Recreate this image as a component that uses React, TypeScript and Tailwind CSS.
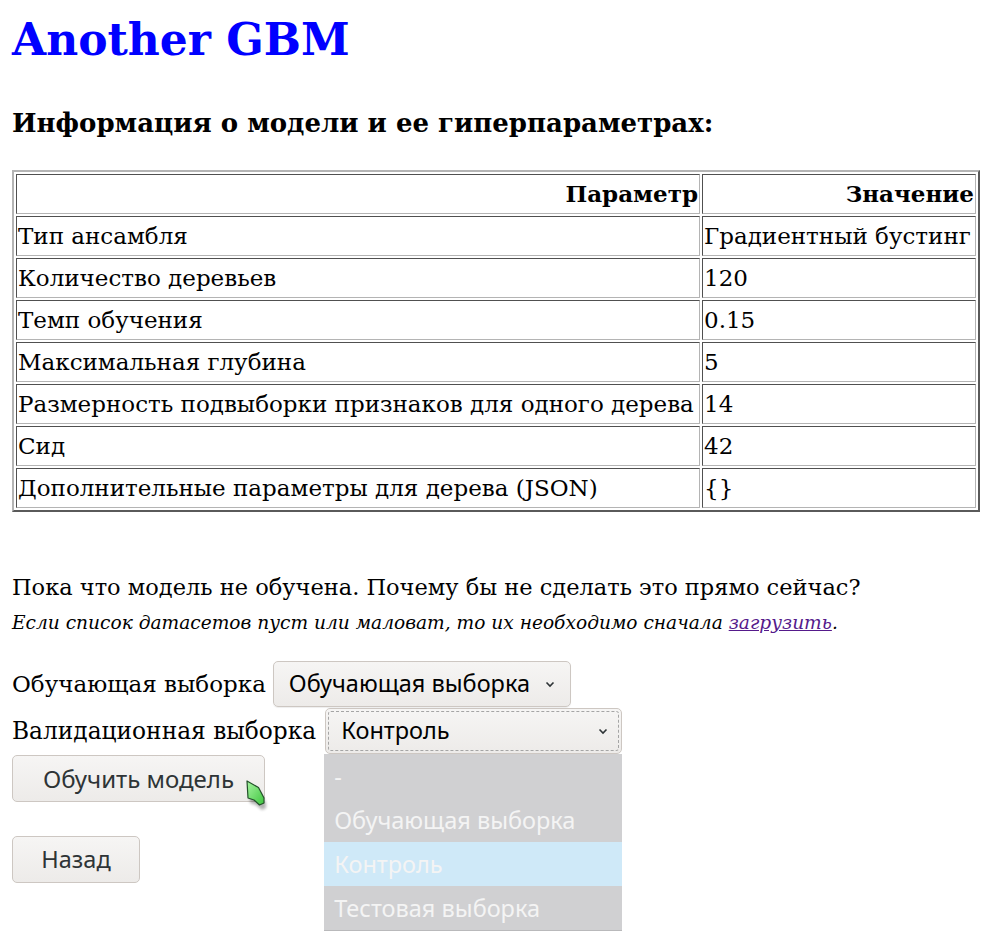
import { useState } from "react";

const params = [
  { name: "Тип ансамбля", value: "Градиентный бустинг" },
  { name: "Количество деревьев", value: "120" },
  { name: "Темп обучения", value: "0.15" },
  { name: "Максимальная глубина", value: "5" },
  { name: "Размерность подвыборки признаков для одного дерева", value: "14" },
  { name: "Сид", value: "42" },
  { name: "Дополнительные параметры для дерева (JSON)", value: "{}" },
];

const datasets = ["-", "Обучающая выборка", "Контроль", "Тестовая выборка"];

const cell =
  "h-[40px] p-[1px] whitespace-nowrap border border-t-[#505050] border-l-[#505050] border-b-[#b4b4b4] border-r-[#b4b4b4]";

function Chevron() {
  return (
    <svg width="10" height="7" viewBox="0 0 10 7" className="shrink-0">
      <polyline points="1.5,1.5 5,5 8.5,1.5" fill="none" stroke="#2e3436" strokeWidth="1.6" />
    </svg>
  );
}

function Cursor() {
  return (
    <svg width="32" height="36" viewBox="0 0 32 36" className="absolute left-[244px] top-[778px] pointer-events-none">
      <defs>
        <linearGradient id="cg" x1="0" y1="0" x2="1" y2="1">
          <stop offset="0" stopColor="#a6f5a0" />
          <stop offset="1" stopColor="#3fc43f" />
        </linearGradient>
        <filter id="cs" x="-50%" y="-50%" width="200%" height="200%">
          <feGaussianBlur stdDeviation="1.8" />
        </filter>
      </defs>
      <path d="M5 7 L6 25 L12 27 L18 32 L22 30 L22 25 L16 14 Z" fill="#000" opacity="0.3" filter="url(#cs)" />
      <path
        d="M3 3 L4 20 L10 22 L15.5 27 L20 25 L20 20 L14.5 9.5 Z"
        fill="url(#cg)"
        stroke="#23512a"
        strokeWidth="1.2"
        strokeLinejoin="round"
      />
    </svg>
  );
}

export default function App() {
  const [train] = useState("Обучающая выборка");
  const [valid] = useState("Контроль");

  return (
    <div className="relative min-h-[943px] bg-white px-[12px] text-black font-['DejaVu_Serif',serif] text-[23px]">
      <h1 className="pt-[14px] text-[44px] leading-[52px] font-bold text-[#0000ff]">Another GBM</h1>
      <h3 className="mt-[40px] text-[26px] leading-[34px] font-bold">Информация о модели и ее гиперпараметрах:</h3>

      <table className="mt-[30px] w-[968px] border-separate border-spacing-[2px] border-2 border-t-[#b4b4b4] border-l-[#b4b4b4] border-b-[#5a5a5a] border-r-[#5a5a5a]">
        <thead>
          <tr>
            <th className={`w-[684px] text-right font-bold ${cell}`}>Параметр</th>
            <th className={`text-right font-bold ${cell}`}>Значение</th>
          </tr>
        </thead>
        <tbody>
          {params.map((p) => (
            <tr key={p.name}>
              <td className={cell}>{p.name}</td>
              <td className={cell}>{p.value}</td>
            </tr>
          ))}
        </tbody>
      </table>

      <p className="mt-[59px] text-[22.5px] leading-[32px]">
        Пока что модель не обучена. Почему бы не сделать это прямо сейчас?
      </p>
      <p className="mt-[6px] text-[18.6px] leading-[28px] italic">
        Если список датасетов пуст или маловат, то их необходимо сначала{" "}
        <a href="#" className="text-[#551a8b] underline">загрузить</a>.
      </p>

      <div className="mt-[24px] flex items-center gap-[7px]">
        <span>Обучающая выборка</span>
        <div className="flex h-[46px] w-[298px] items-center justify-between rounded-[5px] border border-[#cdc7c2] bg-gradient-to-b from-[#f6f5f4] to-[#edebe9] pl-[15px] pr-[15px] font-['Noto_Sans',sans-serif] text-[23.5px] text-black shadow-[0_1px_1px_rgba(0,0,0,0.07)]">
          <span>{train}</span>
          <Chevron />
        </div>
      </div>

      <div className="mt-[1px] flex items-center gap-[7px]">
        <span className="text-[23.3px]">Валидационная выборка</span>
        <div className="relative ml-[2px]">
          <div className="flex h-[46px] w-[297px] items-center rounded-[5px] border border-[#cdc7c2] bg-gradient-to-b from-[#f6f5f4] to-[#edebe9] p-[2px] font-['Noto_Sans',sans-serif] text-[23.5px] text-black">
            <div className="flex h-full w-full items-center justify-between rounded-[3px] border border-dashed border-[#a5a5a5] pl-[12px] pr-[10px]">
              <span>{valid}</span>
              <Chevron />
            </div>
          </div>
          <ul className="absolute left-[-1px] top-[46px] z-10 w-[298px] border-b border-[#b9b9bb] bg-[#d0d0d2] font-['Noto_Sans',sans-serif] text-[23.5px] text-[#f4f4f4]">
            {datasets.map((d) => (
              <li
                key={d}
                className={
                  d === valid
                    ? "h-[44px] pl-[10px] leading-[44px] bg-[#cfe9f8]"
                    : "h-[44px] pl-[10px] leading-[44px]"
                }
              >
                {d}
              </li>
            ))}
          </ul>
        </div>
      </div>

      <button className="mt-[1px] block h-[47px] w-[253px] rounded-[5px] border border-[#cdc7c2] bg-gradient-to-b from-[#f6f5f4] to-[#edebe9] font-['Noto_Sans',sans-serif] text-[24px] text-[#2e3436]">
        Обучить модель
      </button>

      <button className="mt-[34px] block h-[47px] w-[128px] rounded-[5px] border border-[#cdc7c2] bg-gradient-to-b from-[#f6f5f4] to-[#edebe9] font-['Noto_Sans',sans-serif] text-[23.5px] text-[#2e3436]">
        Назад
      </button>

      <Cursor />
    </div>
  );
}
